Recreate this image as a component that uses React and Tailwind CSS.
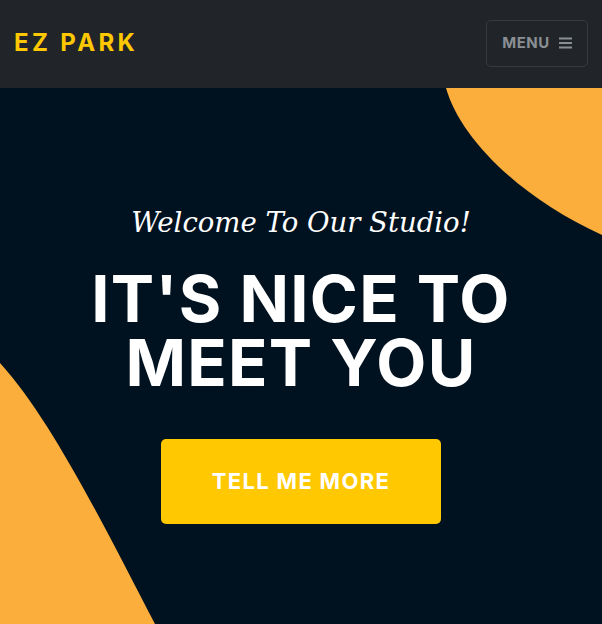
export default function App() {
  return (
    <div className="w-[602px] h-[624px] flex flex-col bg-[#001220] overflow-hidden" style={{ fontFamily: "Inter, 'Open Sans', sans-serif" }}>
      {/* Navbar */}
      <nav className="h-[88px] shrink-0 bg-[#212529] flex items-center justify-between pl-[14px] pr-[14px]">
        <a className="text-[#ffc800] text-[24px] font-bold tracking-[0.14em] leading-none -mt-[2px]">EZ PARK</a>
        <button className="h-[47px] w-[102px] rounded-[5px] border border-[#373b3f] flex items-center justify-center gap-[9px] text-[#8a8f94] -mt-[2px]">
          <span className="text-[15px] font-bold tracking-[0.03em]">MENU</span>
          <svg className="w-[13px] h-[12px]" viewBox="0 0 13 12" fill="currentColor">
            <rect x="0" y="0.5" width="13" height="2" />
            <rect x="0" y="5" width="13" height="2" />
            <rect x="0" y="9.5" width="13" height="2" />
          </svg>
        </button>
      </nav>

      {/* Masthead */}
      <header className="relative flex-1">
        <svg className="absolute inset-0 w-full h-full" viewBox="0 0 602 536" preserveAspectRatio="none">
          <path d="M446 0 C460 50 520 110 602 147 L602 0 Z" fill="#fbae3c" />
          <path d="M0 275 C50 330 100 430 155 536 L0 536 Z" fill="#fbae3c" />
        </svg>
        <div className="relative flex flex-col items-center pt-[115px]">
          <div className="text-white italic text-[27.5px] leading-[38px]" style={{ fontFamily: "'DejaVu Serif', 'Liberation Serif', serif" }}>
            Welcome To Our Studio!
          </div>
          <h1 className="mt-[26px] text-white font-bold text-[65px] leading-[64px] text-center tracking-[0.02em]">
            IT'S NICE TO
            <br />
            MEET YOU
          </h1>
          <a className="mt-[44px] w-[280px] h-[85px] rounded-[5px] bg-[#ffc800] flex items-center justify-center text-white font-bold text-[22px] tracking-[0.06em]">
            TELL ME MORE
          </a>
        </div>
      </header>
    </div>
  );
}
